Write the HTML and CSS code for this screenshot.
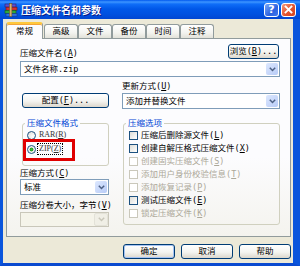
FILE: index.html
```html
<!DOCTYPE html>
<html lang="zh-CN">
<head>
    <meta charset="UTF-8">
    <title>压缩文件名和参数</title>
    <link rel="stylesheet" href="styles.css">
</head>
<body>
    <div class="window">
        <div class="titlebar">
            <svg class="app-icon" width="14" height="14" viewBox="0 0 14 14">
                <rect x="1" y="1" width="11" height="3" fill="#5b4fd0" stroke="#2a2070" stroke-width="0.6"/>
                <rect x="2" y="4.2" width="11" height="3" fill="#d83030" stroke="#701818" stroke-width="0.6"/>
                <rect x="1" y="7.4" width="11" height="3" fill="#2fa83a" stroke="#165a1c" stroke-width="0.6"/>
                <rect x="2" y="10.6" width="11" height="2.6" fill="#2f6fe0" stroke="#163a80" stroke-width="0.6"/>
                <rect x="5.5" y="0.5" width="2.4" height="13" fill="#d8b070" stroke="#6a4a18" stroke-width="0.5"/>
            </svg>
            <span class="title">压缩文件名和参数</span>
            <span class="cap-btn help">?</span>
            <span class="cap-btn close">
                <svg width="9" height="9" viewBox="0 0 9 9"><path d="M1.5 1.5 L7.5 7.5 M7.5 1.5 L1.5 7.5" stroke="#fff" stroke-width="1.8" stroke-linecap="square"/></svg>
            </span>
        </div>

        <div class="dialog">
            <div class="tabs">
                <div class="tab active">常规</div>
                <div class="tab">高级</div>
                <div class="tab">文件</div>
                <div class="tab">备份</div>
                <div class="tab">时间</div>
                <div class="tab">注释</div>
            </div>

            <div class="panel">
                <div class="name-row">
                    <span class="lbl">压缩文件名(<u>A</u>)</span>
                    <div class="btn browse">浏览(<u>B</u>)...</div>
                </div>
                <div class="combo">
                    <span class="val">文件名称.zip</span>
                    <span class="drop"><svg width="7" height="5" viewBox="0 0 7 5"><path d="M0.8 0.8 L3.5 3.5 L6.2 0.8" fill="none" stroke="#4d6185" stroke-width="1.5"/></svg></span>
                </div>

                <div class="grid">
                    <div></div>
                    <div class="lbl">更新方式(<u>U</u>)</div>

                    <div class="btn config">配置(<u>F</u>)...</div>
                    <div class="combo">
                        <span class="val">添加并替换文件</span>
                        <span class="drop"><svg width="7" height="5" viewBox="0 0 7 5"><path d="M0.8 0.8 L3.5 3.5 L6.2 0.8" fill="none" stroke="#4d6185" stroke-width="1.5"/></svg></span>
                    </div>

                    <div class="col-left">
                        <fieldset class="group fmt">
                            <legend>压缩文件格式</legend>
                            <div class="opt"><span class="radio"></span><span class="rtext">RAR(<u>R</u>)</span></div>
                            <div class="opt zip">
                                <span class="radio on"></span><span class="rtext focus">ZIP(<u>Z</u>)</span>
                                <span class="mark"></span>
                            </div>
                        </fieldset>
                        <div class="lbl method">压缩方式(<u>C</u>)</div>
                        <div class="combo">
                            <span class="val">标准</span>
                            <span class="drop"><svg width="7" height="5" viewBox="0 0 7 5"><path d="M0.8 0.8 L3.5 3.5 L6.2 0.8" fill="none" stroke="#4d6185" stroke-width="1.5"/></svg></span>
                        </div>
                        <div class="lbl volume">压缩分卷大小，字节(<u>V</u>)</div>
                        <div class="combo disabled">
                            <span class="val"></span>
                            <span class="drop"><svg width="7" height="5" viewBox="0 0 7 5"><path d="M0.8 0.8 L3.5 3.5 L6.2 0.8" fill="none" stroke="#c9c7ba" stroke-width="1.5"/></svg></span>
                        </div>
                    </div>

                    <fieldset class="group opts">
                        <legend>压缩选项</legend>
                        <div class="chk"><span class="box"></span>压缩后删除源文件(<u>L</u>)</div>
                        <div class="chk"><span class="box"></span>创建自解压格式压缩文件(<u>X</u>)</div>
                        <div class="chk off"><span class="box"></span>创建固实压缩文件(<u>S</u>)</div>
                        <div class="chk off"><span class="box"></span>添加用户身份校验信息(<u>T</u>)</div>
                        <div class="chk off"><span class="box"></span>添加恢复记录(<u>P</u>)</div>
                        <div class="chk"><span class="box"></span>测试压缩文件(<u>E</u>)</div>
                        <div class="chk off"><span class="box"></span>锁定压缩文件(<u>K</u>)</div>
                    </fieldset>
                </div>
            </div>

            <div class="actions">
                <div class="btn default">确定</div>
                <div class="btn">取消</div>
                <div class="btn">帮助</div>
            </div>
        </div>
    </div>
</body>
</html>
```

FILE: styles.css
```css
body { margin: 0; font-family: "DejaVu Sans Mono", "Noto Sans CJK SC", monospace; font-size: 8.5px; line-height: 11px; color: #000; background: #fff; }
u { text-decoration-thickness: 1px; text-underline-offset: 1px; }

.window { width: 300px; height: 266px; display: flex; flex-direction: column; overflow: hidden; }

.titlebar {
    height: 19px;
    display: flex;
    align-items: center;
    padding: 0 4px 0 4px;
    background: linear-gradient(to bottom, #0058ee 0, #3d95ff 2px, #0f6ef8 4px, #0057e8 9px, #0051e0 14px, #0146d2 19px);
    box-sizing: border-box;
}
.app-icon { flex: none; }
.title { flex: 1; margin-left: 3px; color: #fff; font-family: "Noto Sans CJK SC", sans-serif; font-weight: bold; font-size: 10px; text-shadow: 1px 1px #0a1883; }
.cap-btn {
    width: 15px;
    height: 14px;
    box-sizing: border-box;
    border: 1px solid #fff;
    border-radius: 3px;
    display: flex;
    align-items: center;
    justify-content: center;
    color: #fff;
    font: bold 11px "DejaVu Sans", sans-serif;
    margin-left: 2px;
}
.help { background: linear-gradient(135deg, #7aa8f8, #2d63e0 60%, #3f78ef); }
.close { background: linear-gradient(135deg, #f39a7c, #e2532f 55%, #d3441f); }

.dialog {
    flex: 1;
    background: #ece9d8;
    border-left: 3px solid #0a55dc;
    border-right: 7px solid #0a55dc;
    border-bottom: 3px solid #0a4ad0;
    padding: 3px 2px 0 3px;
}

.tabs { display: flex; align-items: flex-end; height: 16px; }
.tab {
    width: 34px;
    height: 14px;
    box-sizing: border-box;
    border: 1px solid #919b9c;
    border-bottom: none;
    border-radius: 3px 3px 0 0;
    background: linear-gradient(#ffffff, #f3f3ef 60%, #e2e1d9);
    text-align: center;
    line-height: 12px;
}
.tab.active {
    width: 37px;
    height: 17px;
    margin-bottom: -1px;
    margin-right: 1px;
    position: relative;
    z-index: 1;
    background: #fcfcfe;
    border-top: 2px solid #ffc83c;
    box-shadow: inset 0 1px #f4a53a;
    line-height: 14px;
}

.panel {
    height: 199px;
    box-sizing: border-box;
    border: 1px solid #919b9c;
    background: linear-gradient(#fcfcfe 60%, #f4f3ee);
    padding: 5px 10px 0 13px;
}

.name-row { display: flex; justify-content: space-between; align-items: flex-end; height: 15px; }
.lbl { line-height: 11px; white-space: nowrap; }

.btn {
    height: 15px;
    box-sizing: border-box;
    border: 1px solid #003c74;
    border-radius: 3px;
    background: linear-gradient(#ffffff, #f4f4f0 55%, #dcd7cc);
    text-align: center;
    line-height: 13px;
    white-space: nowrap;
}
.browse { width: 51px; margin-right: 1px; }

.combo {
    height: 16px;
    box-sizing: border-box;
    border: 1px solid #7f9db9;
    background: #fff;
    display: flex;
    align-items: stretch;
    margin-top: 2px;
}
.combo .val { flex: 1; padding-left: 3px; line-height: 14px; white-space: nowrap; overflow: hidden; }
.combo .drop {
    width: 12px;
    margin: 1px;
    border-radius: 2px;
    background: linear-gradient(135deg, #dde8fe, #b7cbf7);
    display: flex;
    align-items: center;
    justify-content: center;
}
.combo.disabled { border-color: #c9c7ba; background: #f5f4ea; }
.combo.disabled .drop { background: #f0efe6; border: 1px solid #e3e2d8; margin: 0; }

.grid { display: grid; grid-template-columns: 89px 158px; column-gap: 13px; margin-top: 4px; align-items: start; }
.grid > .lbl { height: 12px; }
.config { margin-left: 2px; }
.grid .combo { margin-top: 0; }

.group {
    margin: 9px 0 0 0;
    padding: 0 4px 0 2px;
    border: 1px solid #d0d0bf;
    border-radius: 3px;
    min-inline-size: 0;
}
.group legend { padding: 0 2px; color: #0046d5; line-height: 11px; }

.fmt { margin-left: 2px; height: 48px; box-sizing: border-box; }
.opt { display: flex; align-items: center; height: 12px; margin-left: 2px; }
.opt + .opt { margin-top: 2px; }
.zip { position: relative; }
.radio {
    width: 9px;
    height: 9px;
    box-sizing: border-box;
    border: 1px solid #1c5180;
    border-radius: 50%;
    background: radial-gradient(circle at 70% 70%, #fff, #dcdcd7);
    margin-right: 2px;
    flex: none;
}
.radio.on { background: radial-gradient(circle, #3cc33c 0, #21a121 1.6px, #e8e8e2 2.2px, #ffffff 4px); }
.rtext { color: #333; padding: 0 1px; line-height: 10px; font-family: "Liberation Serif", serif; font-size: 8px; }
.focus { outline: 1px dotted #000; outline-offset: 0; }
.mark {
    position: absolute;
    left: -4px;
    top: -4px;
    width: 52px;
    height: 22px;
    box-sizing: border-box;
    border: 3px solid #e00000;
}

.method { margin-top: 2px; }
.volume { margin-top: 5px; }
.col-left .combo { margin-top: 0; }
.col-left .combo.disabled { margin-top: 1px; height: 15px; }

.opts { margin-left: 1px; height: 107px; box-sizing: border-box; }
.chk { display: flex; align-items: center; height: 13px; margin-left: 3px; white-space: nowrap; }
.chk .box {
    width: 9px;
    height: 9px;
    box-sizing: border-box;
    border: 1px solid #1c5180;
    background: linear-gradient(135deg, #dcdcd7, #ffffff);
    margin-right: 3px;
    flex: none;
}
.chk.off { color: #aca899; }
.chk.off .box { border-color: #cac8bb; background: #fff; }

.actions { display: flex; justify-content: flex-end; gap: 6px; margin-top: 7px; }
.actions .btn { width: 52px; }
.btn.default { box-shadow: inset 0 0 0 1px #a6c3f2; }
```
